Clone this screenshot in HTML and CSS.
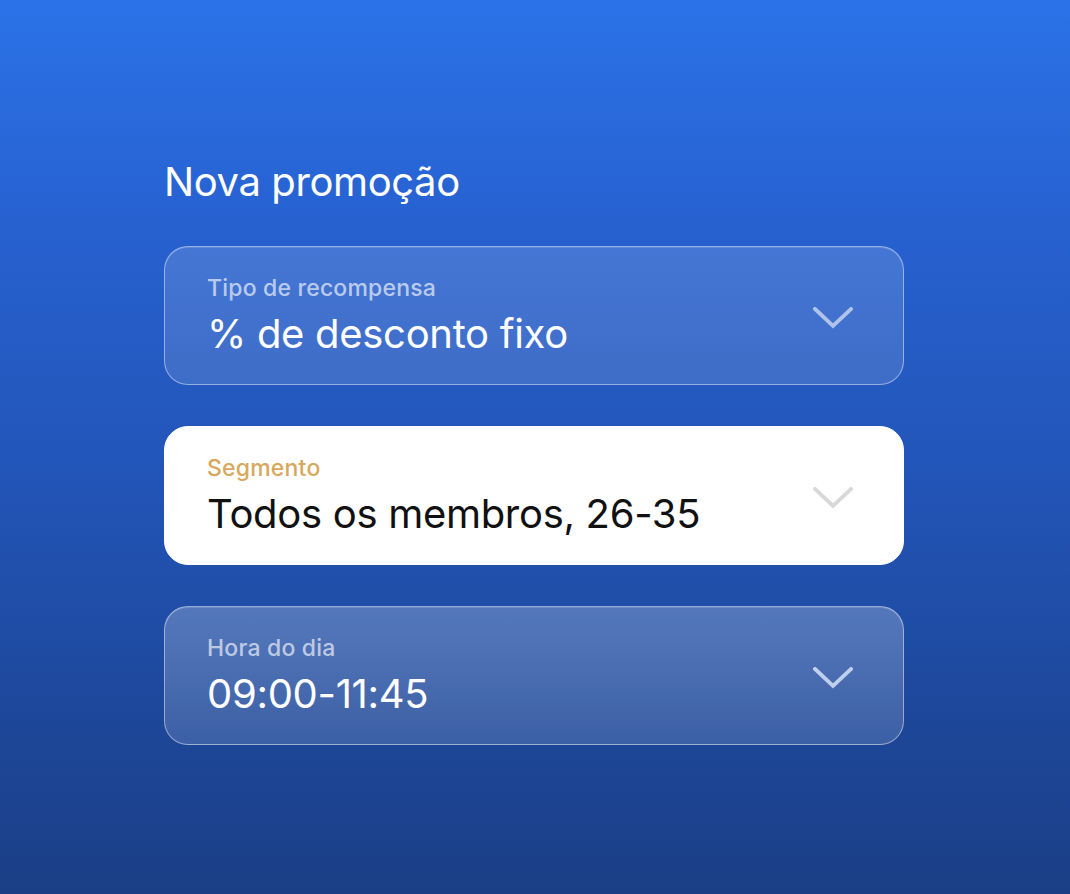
FILE: index.html
```html
<!DOCTYPE html>
<html lang="pt">
<head>
<meta charset="utf-8">
<title>Nova promoção</title>
<link rel="stylesheet" href="styles.css">
</head>
<body>
<main class="panel">
  <h1 class="title">Nova promoção</h1>
  <div class="field field--glass">
    <div class="field__text">
      <div class="field__label">Tipo de recompensa</div>
      <div class="field__value">% de desconto fixo</div>
    </div>
    <svg class="chevron" viewBox="0 0 40 22" width="40" height="22"><polyline points="2,2 20,19 38,2" /></svg>
  </div>
  <div class="field field--active">
    <div class="field__text">
      <div class="field__label">Segmento</div>
      <div class="field__value">Todos os membros, 26-35</div>
    </div>
    <svg class="chevron" viewBox="0 0 40 22" width="40" height="22"><polyline points="2,2 20,19 38,2" /></svg>
  </div>
  <div class="field field--glass field--soft">
    <div class="field__text">
      <div class="field__label">Hora do dia</div>
      <div class="field__value">09:00-11:45</div>
    </div>
    <svg class="chevron" viewBox="0 0 40 22" width="40" height="22"><polyline points="2,2 20,19 38,2" /></svg>
  </div>
</main>
</body>
</html>
```
FILE: styles.css
```css
html, body {
  margin: 0;
  padding: 0;
}
body {
  width: 1070px;
  height: 894px;
  overflow: hidden;
  font-family: Inter, "Noto Sans", sans-serif;
  background: linear-gradient(180deg, #2b72e8 0%, #2761d0 25%, #2254b6 55%, #1d479a 80%, #1b3f86 100%);
  color: #fff;
}
.panel {
  width: 740px;
  margin-left: 164px;
  padding-top: 158px;
  display: flex;
  flex-direction: column;
  gap: 41px;
}
.title {
  margin: 0 0 -1px 0;
  font-size: 40px;
  line-height: 48px;
  font-weight: 400;
  letter-spacing: -0.4px;
}
.field {
  box-sizing: border-box;
  height: 139px;
  border-radius: 24px;
  padding: 0 50px 0 42px;
  display: flex;
  align-items: center;
  justify-content: space-between;
}
.field--glass {
  background: linear-gradient(180deg, rgba(255,255,255,0.14), rgba(255,255,255,0.12));
  border: 1px solid rgba(255,255,255,0.45);
  box-shadow: inset 0 1px 0 rgba(255,255,255,0.15);
}
.field--soft {
  background: linear-gradient(180deg, rgba(255,255,255,0.24) 0%, rgba(255,255,255,0.21) 35%, rgba(255,255,255,0.14) 100%);
}
.field--active {
  background: #fff;
  border: 1px solid #fff;
}
.field__text {
  display: flex;
  flex-direction: column;
  gap: 8px;
}
.field__label {
  font-size: 23px;
  line-height: 28px;
  font-weight: 500;
  letter-spacing: 0.2px;
  color: rgba(255,255,255,0.65);
}
.field__value {
  font-size: 40px;
  line-height: 48px;
  font-weight: 430;
  letter-spacing: -0.3px;
  color: #fff;
}
.field--active .field__label { color: #d7a85c; }
.field--active .field__value { color: #111; }
.chevron {
  fill: none;
  stroke: rgba(255,255,255,0.58);
  stroke-width: 3.8;
  stroke-linecap: square;
  margin-top: 4px;
}
.field--active .chevron { stroke: #d8d8d8; }
.field--soft .chevron { stroke: rgba(220,232,255,0.8); }
```
